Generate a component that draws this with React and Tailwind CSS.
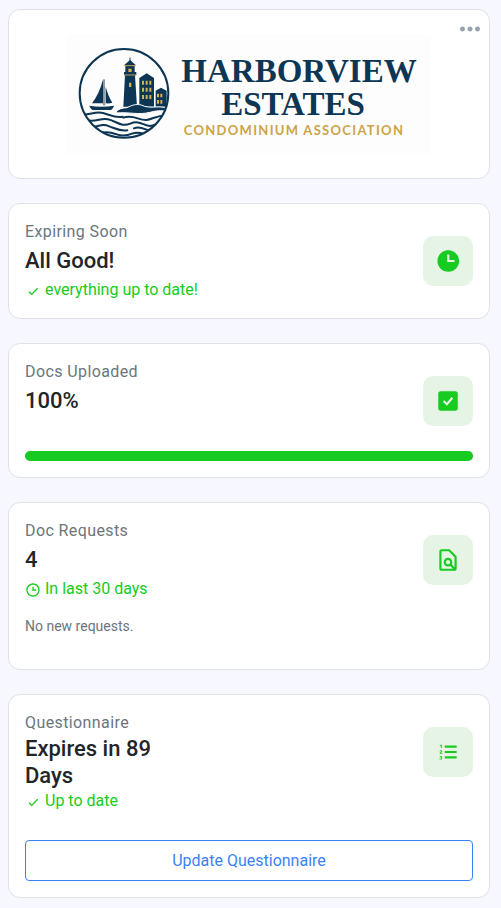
import React from 'react';
import {
  BiCheck,
  BiDotsHorizontalRounded,
  BiFileFind,
  BiListOl,
  BiSolidCheckSquare,
  BiSolidTime,
  BiTime
} from 'react-icons/bi';

function HarborviewLogo() {
  return (
    <svg viewBox="0 0 364 120" className="w-full max-w-[364px]" role="img" aria-label="Harborview Estates Condominium Association">
      <rect width="364" height="120" fill="#fdfdfd" />
      <g transform="translate(3 6) scale(0.3333)">
        <defs>
          <clipPath id="emblem">
            <circle cx="162" cy="160" r="133" />
          </clipPath>
        </defs>
        <g clipPath="url(#emblem)">
          {/* sailboat */}
          <path d="M99 119v71H66c14-18 25-42 33-71z" fill="#0d3654" />
          <path d="M107 140c5 18 11 34 20 48-6 2-13 3-20 2z" fill="#0d3654" />
          <path d="M102 118v78" stroke="#0d3654" strokeWidth="3" />
          <path d="M105 146v50" stroke="#9aa6b2" strokeWidth="3" />
          <path d="M58 197c24 4 48 4 74 0-2 6-5 10-9 13H68c-5-3-8-7-10-13z" fill="#0d3654" />
          {/* lighthouse */}
          <path d="M180 53v12" stroke="#0d3654" strokeWidth="3" />
          <path d="M180 60l17 15h-34z" fill="#0d3654" />
          <path d="M166 75h28v28h-28zM162 96h37v10h-37zM165 106h30l6 94h-41z" fill="#0d3654" />
          <path d="M162 77h36M163 105h35" stroke="#cba552" strokeWidth="3" />
          <path d="M175 86h10v10h-10zM177 128h7v13h-7z" fill="#d3b052" />
          {/* buildings */}
          <path d="M208 114l22-14 22 14v86h-44zM257 152l16-9 17 9v48h-33z" fill="#0d3654" />
          <path
            d="M216 122h6v12h-6zM227 122h6v12h-6zM238 122h6v12h-6zM216 143h6v12h-6zM227 143h6v12h-6zM238 143h6v12h-6zM216 165h6v12h-6zM227 165h6v12h-6zM238 165h6v12h-6zM261 161h6v11h-6zM271 161h6v11h-6zM261 180h6v11h-6zM271 180h6v11h-6z"
            fill="#d3b052"
          />
          {/* headland */}
          <path d="M139 215c7-9 18-11 32-12 14-7 27-12 43-8 12 7 29 7 44 6 12-1 22 1 38 2v12c-24-5-38-3-56 2-34 9-65-2-101 2z" fill="#0d3654" stroke="#fdfdfd" strokeWidth="3" />
          {/* waves */}
          <g fill="none" stroke="#0d3654" strokeWidth="6" strokeLinecap="round">
            <path d="M42 224c24-2 36-10 57-5 22 6 38 16 59 11" />
            <path d="M160 233c32-10 44 8 69 7 20-2 35-17 68-13" />
            <path d="M54 242c28 4 38-9 60-4 28 7 40 24 67 13 28-12 39 7 60 7 18-2 28-14 47-14" />
            <path d="M68 262c20-5 32-11 50-3 22 8 33 16 54 12" />
            <path d="M192 265c20-10 34 6 49 7 14 1 20-2 30-7" />
            <path d="M92 280c18-8 34-2 48 3 20 7 32 4 46-2 18-7 32 0 45 2" />
          </g>
        </g>
        <circle cx="162" cy="160" r="133" fill="none" stroke="#0d3654" strokeWidth="6" />
      </g>
      <g textAnchor="middle">
        <text x="232" y="48" className="font-['Liberation_Serif',serif] text-[33px] font-bold" fill="#0d3654">HARBORVIEW</text>
        <text x="226" y="81" className="font-['Liberation_Serif',serif] text-[33px] font-bold" fill="#0d3654">ESTATES</text>
        <text x="227" y="101" className="font-[Lato,sans-serif] text-[13px] font-bold tracking-widest" fill="#cda349">CONDOMINIUM ASSOCIATION</text>
      </g>
    </svg>
  );
}

function StatCard({ label, value, valueClass = 'leading-[34px]', icon: Icon, status, statusIcon: StatusIcon, children }) {
  return (
    <section className="rounded-xl border border-[#dee2e6] bg-white p-4">
      <div className="flex items-start justify-between">
        <div>
          <p className="text-base tracking-wide text-[#6c757d]">{label}</p>
          <h2 className={`text-[22px] font-medium text-[#212529] ${valueClass}`}>{value}</h2>
          {status && (
            <p className="flex items-center gap-1 text-base text-[#17cb21]">
              <StatusIcon size={16} className="mt-0.5" />
              {status}
            </p>
          )}
        </div>
        <div className="mt-4 flex size-[50px] shrink-0 items-center justify-center rounded-[10px] bg-[#e6f4e6] text-[#17cb21]">
          <Icon size={26} />
        </div>
      </div>
      {children}
    </section>
  );
}

function App() {
  return (
    <main className="min-h-screen bg-[#f7f7ff] pt-[9px] pr-[11px] pb-[10px] pl-2 font-[Roboto,sans-serif]">
      <div className="flex flex-col gap-6">
        <section className="relative flex justify-center rounded-xl border border-[#dee2e6] bg-white px-4 py-6">
          <HarborviewLogo />
          <button type="button" aria-label="More options" className="absolute top-1 right-1 text-[#98a2b3]">
            <BiDotsHorizontalRounded size={30} />
          </button>
        </section>

        <StatCard
          label="Expiring Soon"
          value="All Good!"
          icon={BiSolidTime}
          status="everything up to date!"
          statusIcon={BiCheck}
        />

        <StatCard label="Docs Uploaded" value="100%" icon={BiSolidCheckSquare}>
          <div role="progressbar" aria-label="Docs uploaded" aria-valuenow={100} className="mt-[25px] h-[10px] rounded-full bg-[#e9ecef]">
            <div className="h-full rounded-full bg-[#17cb21]" style={{ width: '100%' }} />
          </div>
        </StatCard>

        <StatCard
          label="Doc Requests"
          value="4"
          icon={BiFileFind}
          status="In last 30 days"
          statusIcon={BiTime}
        >
          <p className="mt-[14px] mb-4 text-sm leading-[22px] text-[#6c757d]">No new requests.</p>
        </StatCard>

        <StatCard
          label="Questionnaire"
          value="Expires in 89 Days"
          valueClass="max-w-40 leading-[27px]"
          icon={BiListOl}
          status="Up to date"
          statusIcon={BiCheck}
        >
          <button type="button" className="mt-[27px] w-full rounded border border-[#3b82f6] px-3 py-2 text-base leading-[23px] text-[#3b82f6]">
            Update Questionnaire
          </button>
        </StatCard>
      </div>
    </main>
  );
}

export default App;
